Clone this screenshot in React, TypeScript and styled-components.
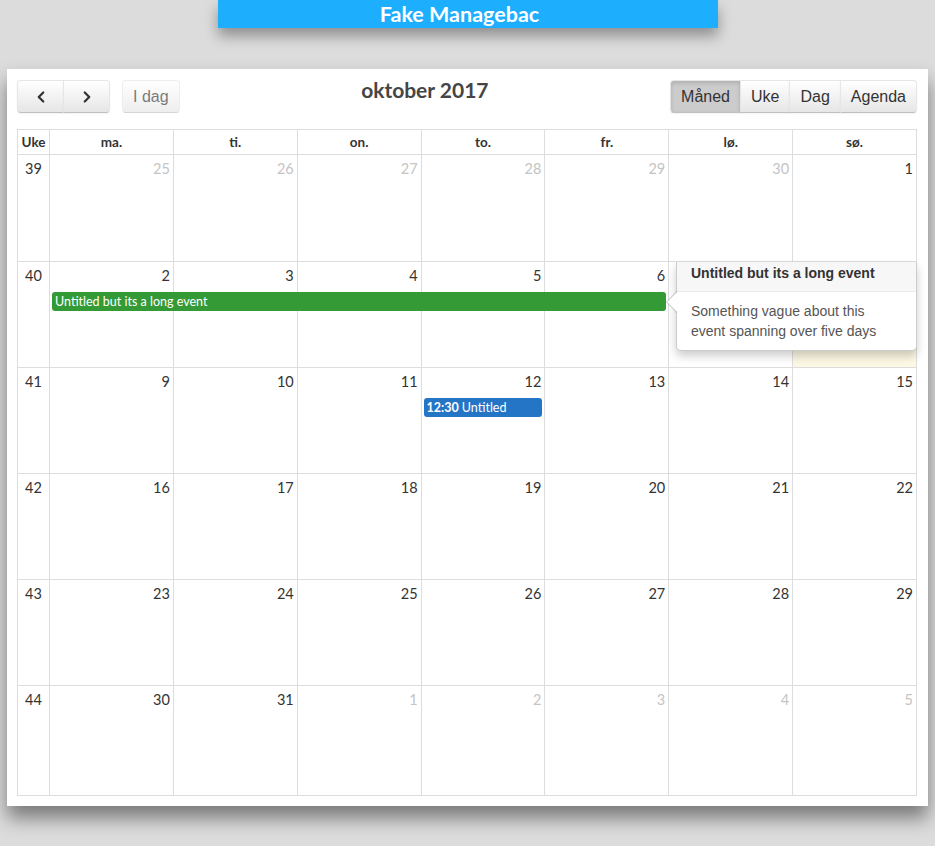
import styled, { createGlobalStyle, css } from "styled-components";
import { ChevronLeft, ChevronRight } from "lucide-react";

const GlobalStyle = createGlobalStyle`
    html, body {
        margin: 0;
        padding: 0;
        background-color: #dcdcdc;
        font-family: Lato, "Open Sans", sans-serif;
    }
`;

const Page = styled.div`
    min-height: 846px;
    display: flex;
    flex-direction: column;
    align-items: center;
`;

const TopBar = styled.header`
    width: 500px;
    height: 28px;
    box-sizing: border-box;
    padding-right: 16px;
    background-color: #1eaefe;
    color: #ffffff;
    font-size: 21.5px;
    font-weight: 700;
    line-height: 28px;
    text-align: center;
    box-shadow: 0 8px 14px rgba(0, 0, 0, 0.35);
    margin-bottom: 41px;
`;

const Card = styled.main`
    position: relative;
    width: 921px;
    box-sizing: border-box;
    background-color: #ffffff;
    padding: 11px 11px 10px 10px;
    box-shadow: 0 12px 18px rgba(0, 0, 0, 0.45);
`;

const Toolbar = styled.div`
    display: flex;
    align-items: center;
    height: 33px;
    margin-bottom: 16px;
`;

const ToolGroup = styled.div`
    display: flex;
    align-items: center;
    gap: 12px;
`;

const ButtonGroup = styled.div`
    display: flex;
`;

const Button = styled.button<{ $active?: boolean }>`
    height: 33px;
    box-sizing: border-box;
    padding: 0 10px;
    margin: 0 0 0 -1px;
    font-family: "Liberation Sans", Arial, sans-serif;
    font-size: 16px;
    color: #333333;
    background: linear-gradient(#ffffff, #e6e6e6);
    border: 1px solid;
    border-color: #e6e6e6 #e6e6e6 #bfbfbf;
    box-shadow: inset 0 1px 0 rgba(255, 255, 255, 0.2), 0 1px 2px rgba(0, 0, 0, 0.05);
    display: flex;
    align-items: center;
    justify-content: center;
    cursor: pointer;

    &:first-child {
        margin-left: 0;
        border-radius: 4px 0 0 4px;
    }
    &:last-child {
        border-radius: 0 4px 4px 0;
    }
    &:only-child {
        border-radius: 4px;
    }

    ${({ $active }) =>
        $active &&
        css`
            background: #cccccc;
            box-shadow: inset 0 2px 4px rgba(0, 0, 0, 0.15), 0 1px 2px rgba(0, 0, 0, 0.05);
        `}

    &:disabled {
        opacity: 0.65;
        box-shadow: none;
        cursor: default;
    }
`;

const ArrowButton = styled(Button)`
    width: 47px;
`;

const Title = styled.h2`
    flex: 1;
    margin: 0;
    text-align: center;
    font-size: 21px;
    font-weight: 700;
    color: #454545;
    transform: translateY(-7px);
`;

const Table = styled.div`
    border: 1px solid #dddddd;
    border-top: none;
`;

const Row = styled.div<{ $height?: number }>`
    position: relative;
    display: grid;
    grid-template-columns: 31px repeat(7, 1fr);
    grid-template-rows: 30px auto 1fr;
    border-top: 1px solid #dddddd;
    box-sizing: border-box;
    height: ${({ $height }) => $height ?? 106}px;
`;

const HeadRow = styled(Row)`
    grid-template-rows: 1fr;
    height: 25px;
`;

const HeadCell = styled.div<{ $first?: boolean }>`
    border-left: ${({ $first }) => ($first ? "none" : "1px solid #dddddd")};
    font-size: 13.5px;
    font-weight: 700;
    color: #333333;
    text-align: center;
    line-height: 24px;
`;

const WeekCell = styled.div`
    grid-row: 1 / -1;
    grid-column: 1;
    text-align: center;
    padding-top: 5px;
    font-size: 14.5px;
    color: #333333;
`;

const DayCell = styled.div<{ $col: number; $other?: boolean; $today?: boolean }>`
    grid-row: 1 / -1;
    grid-column: ${({ $col }) => $col + 2};
    border-left: 1px solid #dddddd;
    background-color: ${({ $today }) => ($today ? "#fcf8e3" : "transparent")};
    text-align: right;
    padding: 5px 3px 0 0;
    font-size: 14.5px;
    color: ${({ $other }) => ($other ? "#c4c4c4" : "#333333")};
`;

const Event = styled.div<{ $color: string; $start: number; $span: number }>`
    grid-row: 2;
    grid-column: ${({ $start, $span }) => `${$start + 2} / span ${$span}`};
    z-index: 1;
    margin: 0 2px 0 3px;
    height: 19px;
    box-sizing: border-box;
    padding: 0 3px;
    border-radius: 3px;
    background-color: ${({ $color }) => $color};
    color: #ffffff;
    font-size: 12.5px;
    line-height: 19px;
    white-space: nowrap;
    overflow: hidden;

    b {
        font-weight: 700;
    }
`;

const Popover = styled.div`
    position: absolute;
    top: 0;
    left: 658px;
    width: 241px;
    box-sizing: border-box;
    z-index: 3;
    background-color: #ffffff;
    border: 1px solid rgba(0, 0, 0, 0.2);
    border-top: none;
    border-radius: 0 0 5px 5px;
    box-shadow: 0 5px 10px rgba(0, 0, 0, 0.2);
    font-family: "Liberation Sans", Arial, sans-serif;
    font-size: 14px;

    &::before,
    &::after {
        content: "";
        position: absolute;
        border-style: solid;
        border-color: transparent;
    }
    &::before {
        top: 29px;
        left: -11px;
        border-width: 11px 11px 11px 0;
        border-right-color: rgba(0, 0, 0, 0.25);
    }
    &::after {
        left: -10px;
        top: 30px;
        border-width: 10px 10px 10px 0;
        border-right-color: #ffffff;
    }
`;

const PopoverTitle = styled.div`
    padding: 3px 14px 9px;
    background-color: #f7f7f7;
    border-bottom: 1px solid #ebebeb;
    font-weight: 700;
    color: #333333;
    line-height: 17px;
`;

const PopoverBody = styled.div`
    padding: 9px 14px 9px;
    color: #555555;
    line-height: 20px;
`;

type Day = { d: number; other?: boolean; today?: boolean };
type CalEvent = { start: number; span: number; color: string; time?: string; label: string };
type Week = { no: number; days: Day[]; events?: CalEvent[]; height?: number; popover?: boolean };

const range = (from: number, to: number, other = false): Day[] =>
    Array.from({ length: to - from + 1 }, (_, i) => ({ d: from + i, other }));

const weeks: Week[] = [
    { no: 39, days: [...range(25, 30, true), { d: 1 }], height: 107 },
    {
        no: 40,
        days: [...range(2, 7), { d: 8, today: true }],
        events: [{ start: 0, span: 5, color: "#339a35", label: "Untitled but its a long event" }],
        popover: true,
    },
    {
        no: 41,
        days: range(9, 15),
        events: [{ start: 3, span: 1, color: "#2575c7", time: "12:30", label: "Untitled" }],
    },
    { no: 42, days: range(16, 22) },
    { no: 43, days: range(23, 29) },
    { no: 44, days: [...range(30, 31), ...range(1, 5, true)], height: 110 },
];

const dayNames = ["ma.", "ti.", "on.", "to.", "fr.", "lø.", "sø."];

export default function App() {
    return (
        <Page>
            <GlobalStyle />
            <TopBar>Fake Managebac</TopBar>
            <Card>
                <Toolbar>
                    <ToolGroup>
                        <ButtonGroup>
                            <ArrowButton aria-label="Forrige">
                                <ChevronLeft size={18} strokeWidth={3} />
                            </ArrowButton>
                            <ArrowButton aria-label="Neste">
                                <ChevronRight size={18} strokeWidth={3} />
                            </ArrowButton>
                        </ButtonGroup>
                        <ButtonGroup>
                            <Button disabled>I dag</Button>
                        </ButtonGroup>
                    </ToolGroup>
                    <Title>oktober 2017</Title>
                    <ToolGroup>
                        <ButtonGroup>
                            <Button $active>Måned</Button>
                            <Button>Uke</Button>
                            <Button>Dag</Button>
                            <Button>Agenda</Button>
                        </ButtonGroup>
                    </ToolGroup>
                </Toolbar>
                <Table>
                    <HeadRow>
                        <HeadCell $first>Uke</HeadCell>
                        {dayNames.map((n) => (
                            <HeadCell key={n}>{n}</HeadCell>
                        ))}
                    </HeadRow>
                    {weeks.map((w) => (
                        <Row key={w.no} $height={w.height}>
                            <WeekCell>{w.no}</WeekCell>
                            {w.days.map((day, i) => (
                                <DayCell key={i} $col={i} $other={day.other} $today={day.today}>
                                    {day.d}
                                </DayCell>
                            ))}
                            {w.events?.map((ev) => (
                                <Event key={ev.label} $color={ev.color} $start={ev.start} $span={ev.span}>
                                    {ev.time && <b>{ev.time} </b>}
                                    {ev.label}
                                </Event>
                            ))}
                            {w.popover && (
                                <Popover>
                                    <PopoverTitle>Untitled but its a long event</PopoverTitle>
                                    <PopoverBody>
                                        Something vague about this event spanning over five days
                                    </PopoverBody>
                                </Popover>
                            )}
                        </Row>
                    ))}
                </Table>
            </Card>
        </Page>
    );
}
